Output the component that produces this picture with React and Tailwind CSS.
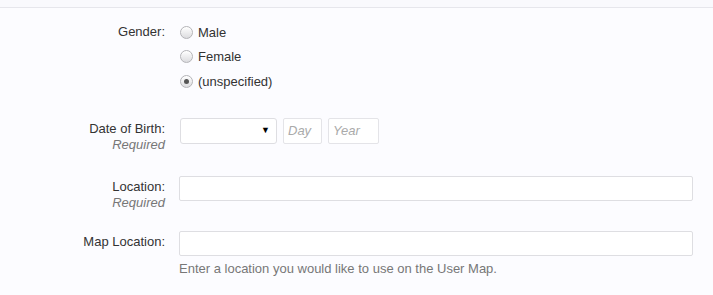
import React from "react";

function Radio({ checked, label }) {
  return (
    <label className="flex items-center h-[24.5px]">
      <span className="w-[13px] h-[13px] rounded-full border border-[#b4b4b8] bg-gradient-to-b from-[#ffffff] to-[#dcdcdf] flex items-center justify-center shadow-[inset_0_1px_1px_rgba(255,255,255,0.8)]">
        {checked && <span className="w-[5px] h-[5px] rounded-full bg-[#555]" />}
      </span>
      <span className="ml-[5px] text-[#333]">{label}</span>
    </label>
  );
}

function Label({ text, required }) {
  return (
    <div className="w-[165px] shrink-0 text-right pt-[3px] leading-4 text-[#333]">
      <div>{text}</div>
      {required && <div className="italic text-[#777]">Required</div>}
    </div>
  );
}

export default function App() {
  return (
    <div
      className="w-[713px] h-[295px] bg-[#fcfcff] text-[13px] overflow-hidden"
      style={{ fontFamily: '"Liberation Sans", Arial, sans-serif' }}
    >
      <div className="h-[8px] bg-[#f9f9fd] border-b border-[#e6e6ec]" />

      <div className="pt-[12px] pr-[20px]">
        {/* gender */}
        <div className="flex gap-[15px]">
          <div className="w-[165px] shrink-0 text-right text-[#333] leading-[24.5px]">Gender:</div>
          <div className="flex flex-col">
            <Radio label="Male" />
            <Radio label="Female" />
            <Radio label="(unspecified)" checked />
          </div>
        </div>

        {/* dob */}
        <div className="flex gap-[15px] mt-[24px]">
          <Label text="Date of Birth:" required />
          <div className="flex gap-[6px] h-[26px]">
            <div className="w-[97px] h-full bg-white border border-[#dedee2] rounded-[3px] flex items-center justify-end pr-[6px]">
              <span className="text-[9px] text-black">▼</span>
            </div>
            <div className="w-[39px] h-full bg-white border border-[#e4e4e8] rounded-[2px] flex items-center px-[4px] italic text-[#aaa]">
              Day
            </div>
            <div className="w-[51px] h-full bg-white border border-[#e4e4e8] rounded-[2px] flex items-center px-[4px] italic text-[#aaa]">
              Year
            </div>
          </div>
        </div>

        {/* location */}
        <div className="flex gap-[14px] mt-[23px]">
          <Label text="Location:" required />
          <div className="flex-1 h-[25px] bg-white border border-[#dedee2] rounded-[2px]" />
        </div>

        {/* map location */}
        <div className="flex gap-[14px] mt-[20px]">
          <Label text="Map Location:" />
          <div className="flex-1">
            <div className="h-[25px] bg-white border border-[#dedee2] rounded-[2px]" />
            <div className="mt-[5px] text-[#777] leading-4">
              Enter a location you would like to use on the User Map.
            </div>
          </div>
        </div>
      </div>
    </div>
  );
}
